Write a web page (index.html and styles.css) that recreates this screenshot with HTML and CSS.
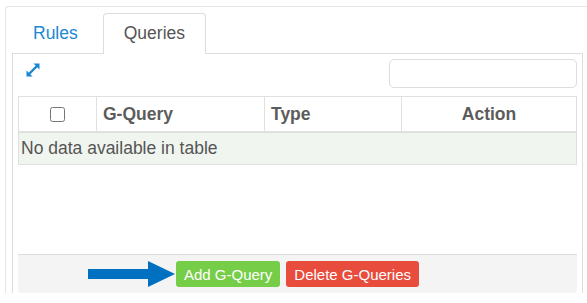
FILE: index.html
```html
<!DOCTYPE html>
<html lang="en">
<head>
  <meta charset="UTF-8">
  <title>Queries</title>
  <link rel="stylesheet" href="styles.css">
</head>
<body>

<div class="box">
  <ul class="tabs">
    <li class="tab">Rules</li>
    <li class="tab active">Queries</li>
  </ul>

  <div class="panel">
    <div class="toolbar">
      <span class="expand">
        <svg width="16" height="16" viewBox="0 0 16 16">
          <polygon points="8.5,1.5 14.5,1.5 14.5,7.5" fill="#1a87d4"/>
          <polygon points="1.5,8.5 1.5,14.5 7.5,14.5" fill="#1a87d4"/>
          <line x1="12" y1="4" x2="4" y2="12" stroke="#1a87d4" stroke-width="2.4"/>
        </svg>
      </span>
      <input class="search" type="text">
    </div>

    <table class="grid">
      <colgroup>
        <col class="c-check">
        <col class="c-query">
        <col class="c-type">
        <col class="c-action">
      </colgroup>
      <thead>
        <tr>
          <th class="center"><input type="checkbox" class="check"></th>
          <th>G-Query</th>
          <th>Type</th>
          <th class="center">Action</th>
        </tr>
      </thead>
      <tbody>
        <tr class="empty">
          <td colspan="4">No data available in table</td>
        </tr>
      </tbody>
    </table>

    <div class="footer">
      <!-- arrow pointing at the add button -->
      <svg class="pointer" width="88" height="26" viewBox="0 0 88 26">
        <rect x="0" y="8" width="62" height="10" fill="#0070c0"/>
        <polygon points="60,0 87,13 60,26" fill="#0070c0"/>
      </svg>
      <button class="btn btn-add">Add G-Query</button>
      <button class="btn btn-delete">Delete G-Queries</button>
    </div>
  </div>
</div>

</body>
</html>
```

FILE: styles.css
```css
body {
  margin: 0;
  font-family: "Liberation Sans", Arial, sans-serif;
  background: #fff;
  overflow: hidden;
}

.box {
  margin: 6px 0 0 5px;
  width: 600px;
  height: 287px;
  box-sizing: border-box;
  padding: 6px 0 0 6px;
  border-top: 1px solid #e5e5e5;
  border-left: 1px solid #e5e5e5;
  border-top-left-radius: 3px;
}

.tabs {
  list-style: none;
  margin: 0 0 -1px 0;
  padding: 0;
  display: flex;
  gap: 4px;
}

.tab {
  position: relative;
  padding: 7px 20px 8px;
  line-height: 25px;
  font-size: 17.5px;
  color: #1e88d2;
  border: 1px solid transparent;
  border-bottom: 0;
  border-radius: 4px 4px 0 0;
}

.tab.active {
  color: #555;
  background: #fff;
  border-color: #ddd;
  z-index: 1;
}

.panel {
  width: 571px;
  height: 240px;
  box-sizing: border-box;
  padding: 0 5px 0 5px;
  border: 1px solid #ddd;
  border-bottom: 0;
  display: flex;
  flex-direction: column;
}

.toolbar {
  display: flex;
  justify-content: space-between;
  align-items: flex-start;
  padding-top: 5px;
}

.expand {
  display: block;
  width: 16px;
  height: 16px;
  margin: 3px 0 0 7px;
}

.search {
  width: 188px;
  height: 29px;
  box-sizing: border-box;
  border: 1px solid #ddd;
  border-radius: 5px;
  margin: 0;
}

.grid {
  margin-top: 8px;
  width: 100%;
  table-layout: fixed;
  border-collapse: collapse;
  border: 1px solid #e0e0e0;
  font-size: 17.5px;
  color: #555;
}

.c-check { width: 78px; }
.c-query { width: 168px; }
.c-type { width: 137px; }
.c-action { width: 175px; }

.grid th {
  height: 34px;
  padding: 0 6px;
  text-align: left;
  font-weight: bold;
  color: #5c5c5c;
  border: 1px solid #e0e0e0;
  border-bottom-width: 2px;
}

.grid th.center {
  text-align: center;
}

.check {
  width: 15px;
  height: 15px;
  margin: 0;
  vertical-align: middle;
}

.grid td {
  padding: 3px 2px;
  line-height: 25px;
  border: 1px solid #e0e0e0;
}

.empty {
  background: #f1f5f0;
}

.footer {
  position: relative;
  margin-top: auto;
  padding: 6px 0;
  display: flex;
  justify-content: center;
  gap: 6px;
  background: #f4f4f4;
  border-top: 1px solid #ddd;
  border-radius: 0 0 4px 4px;
}

.pointer {
  position: absolute;
  left: 70px;
  top: 6px;
}

.btn {
  height: 26px;
  padding: 0 8px;
  border: 0;
  border-radius: 3px;
  font-family: "Liberation Sans", Arial, sans-serif;
  font-size: 15px;
  color: #fff;
}

.btn-add {
  background: #76cd47;
}

.btn-delete {
  background: #e74c3c;
}
```
